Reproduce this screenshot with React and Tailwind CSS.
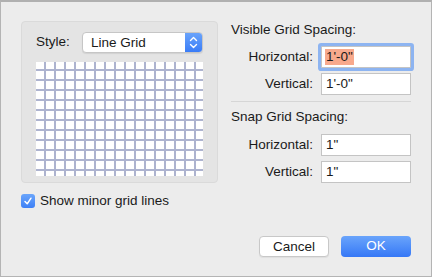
import React from 'react';

const font = { fontFamily: '"Liberation Sans", Arial, sans-serif' };

const GridPreview = () => {
    const cols = [];
    for (let x = 8; x < 167; x += 10) cols.push(x);
    const rows = [];
    for (let y = 7; y < 114; y += 10) rows.push(y);
    return (
        <svg width="167" height="114" className="block bg-white">
            {cols.map((x) => (
                <rect key={'c' + x} x={x} y="0" width="2" height="114" fill="#adb3cf" />
            ))}
            {rows.map((y) => (
                <rect key={'r' + y} x="0" y={y} width="167" height="2" fill="#adb3cf" />
            ))}
        </svg>
    );
};

const Field = ({ value, focused }) => (
    <div
        className={
            'w-[90px] h-[22px] bg-white border border-[#c4c4c4] flex items-center pl-[3px] text-[13.5px] text-[#1a1a1a] ' +
            (focused ? 'ring-[3px] ring-[#8db4f1] rounded-[1px]' : '')
        }
    >
        {focused ? <span className="bg-[#f8a98c] leading-[16px] px-[1px]">{value}</span> : <span className="px-[1px]">{value}</span>}
    </div>
);

const Row = ({ label, value, focused }) => (
    <div className="flex items-center justify-end gap-[8px]">
        <span className="text-[13.5px] text-[#1a1a1a]">{label}</span>
        <Field value={value} focused={focused} />
    </div>
);

export default function App() {
    return (
        <div
            className="w-[432px] h-[277px] bg-[#ececec] border border-[#b4b4b4] border-t-2 border-t-[#b0b0b0] flex flex-col"
            style={font}
        >
            <div className="flex pt-[19px] pl-[20px] pr-[20px] gap-[13px]">
                {/* left column */}
                <div className="w-[197px] flex flex-col">
                    <div className="h-[162px] bg-[#e4e4e4] border border-[#dadada] rounded-[4px] pt-[10px] pl-[14px]">
                        <div className="flex items-center">
                            <span className="w-[46px] text-[13.5px] text-[#1a1a1a]">Style:</span>
                            <div className="w-[121px] h-[21px] flex bg-white rounded-[4px] border border-[#c6c6c6] shadow-[0_1px_1px_rgba(0,0,0,0.08)] overflow-hidden">
                                <span className="flex-1 pl-[8px] text-[13.5px] text-[#1a1a1a] leading-[19px]">Line Grid</span>
                                <div className="w-[17px] bg-gradient-to-b from-[#69a3fb] to-[#3a7cf7] flex items-center justify-center">
                                    <svg width="9" height="13" viewBox="0 0 9 13" fill="none" stroke="white" strokeWidth="1.4" strokeLinecap="round" strokeLinejoin="round">
                                        <path d="M1.5 4.5 L4.5 1.5 L7.5 4.5" />
                                        <path d="M1.5 8.5 L4.5 11.5 L7.5 8.5" />
                                    </svg>
                                </div>
                            </div>
                        </div>
                        <div className="mt-[9px]">
                            <GridPreview />
                        </div>
                    </div>
                    <div className="mt-[8px] flex items-center gap-[5px]">
                        <div className="w-[14px] h-[14px] rounded-[3px] bg-gradient-to-b from-[#6aa5fb] to-[#3e80f6] flex items-center justify-center">
                            <svg width="10" height="10" viewBox="0 0 10 10" fill="none" stroke="white" strokeWidth="1.5" strokeLinecap="round" strokeLinejoin="round">
                                <path d="M2 5.5 L4.2 7.8 L8 2.2" />
                            </svg>
                        </div>
                        <span className="text-[13.5px] text-[#1a1a1a]">Show minor grid lines</span>
                    </div>
                </div>

                {/* right column */}
                <div className="w-[180px] flex flex-col">
                    <div className="mt-[1px] text-[13.5px] leading-[16px] text-[#1a1a1a]">Visible Grid Spacing:</div>
                    <div className="mt-[8px] flex flex-col gap-[5px]">
                        <Row label="Horizontal:" value={"1'-0\""} focused />
                        <Row label="Vertical:" value={"1'-0\""} />
                    </div>
                    <div className="mt-[6px] h-px bg-[#d6d6d6]" />
                    <div className="mt-[7px] text-[13.5px] leading-[16px] text-[#1a1a1a]">Snap Grid Spacing:</div>
                    <div className="mt-[9px] flex flex-col gap-[5px]">
                        <Row label="Horizontal:" value={'1"'} />
                        <Row label="Vertical:" value={'1"'} />
                    </div>
                </div>
            </div>

            <div className="mt-auto flex justify-end gap-[12px] pr-[20px] pb-[19px]">
                <button className="w-[70px] h-[21px] bg-white border border-[#c8c8c8] rounded-[4px] shadow-[0_1px_1px_rgba(0,0,0,0.06)] text-[13.5px] text-[#1a1a1a]">
                    Cancel
                </button>
                <button className="w-[70px] h-[21px] rounded-[4px] bg-gradient-to-b from-[#6aa4fb] to-[#3577f6] text-[13.5px] text-white">
                    OK
                </button>
            </div>
        </div>
    );
}
